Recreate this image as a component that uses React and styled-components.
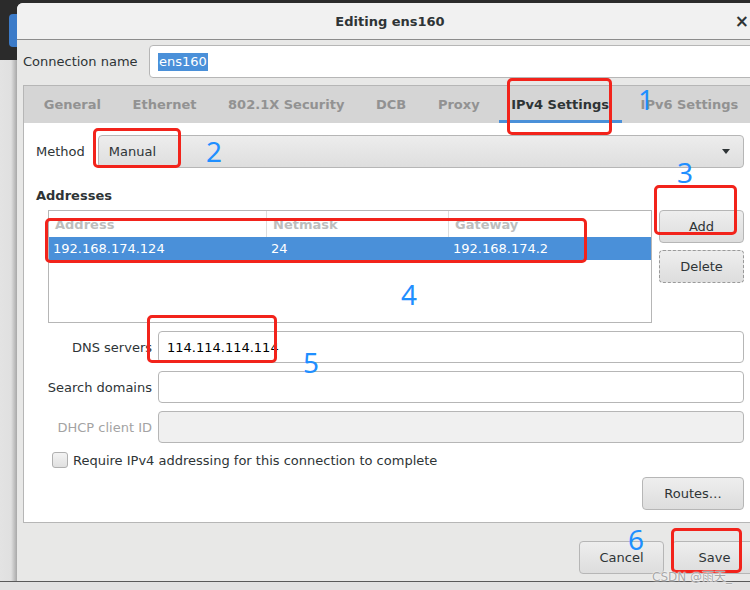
import styled, { createGlobalStyle } from "styled-components"

const GlobalStyle = createGlobalStyle`
  html, body {
    margin: 0;
    padding: 0;
  }
  body {
    width: 750px;
    height: 590px;
    overflow: hidden;
    background: #2b2b2b;
    font-family: "DejaVu Sans", "Noto Sans CJK SC", sans-serif;
    font-size: 13px;
    color: #2e3436;
  }
`

const Screen = styled.div`
  position: relative;
  width: 750px;
  height: 590px;
  overflow: hidden;
  display: flex;
  flex-direction: column;
  background: #2b2b2b;
`

const TopEdge = styled.div`
  height: 3px;
  flex: none;
  background: #2b2b2b;
`

const Middle = styled.div`
  flex: 1;
  display: flex;
  min-height: 0;
`

const SideStrip = styled.div`
  width: 17px;
  flex: none;
  display: flex;
  flex-direction: column;
`

const SideDark = styled.div`
  height: 57px;
  flex: none;
  background: #2b2b2b;
  padding: 11px 0 0 9px;
  box-sizing: border-box;
`

const SideButton = styled.div`
  height: 33px;
  background: #3c7bc8;
  border-radius: 4px 0 0 4px;
`

const SideLight = styled.div`
  flex: 1;
  background: linear-gradient(to right, #e3e3e3 0, #e0e0e0 11px, #c4c4c4 14px, #a8a8a8 17px);
`

const Dialog = styled.div`
  width: 746px;
  flex: none;
  display: flex;
  flex-direction: column;
  background: #e8e8e7;
  border-radius: 6px 6px 0 0;
  overflow: hidden;
`

const TitleBar = styled.div`
  height: 36px;
  flex: none;
  display: grid;
  grid-template-columns: 1fr auto 1fr;
  align-items: center;
  background: #f1f1f1;
  border-bottom: 1px solid #8c8c8c;
`

const Title = styled.div`
  grid-column: 2;
  font-weight: bold;
  color: #2e3436;
`

const Close = styled.div`
  justify-self: end;
  padding-right: 14px;
  font-size: 17px;
  font-weight: bold;
  color: #2e3436;
`

const Body = styled.div`
  flex: 1;
  display: flex;
  flex-direction: column;
  padding: 5px 6px 0;
`

const NameRow = styled.div`
  display: flex;
  align-items: center;
  height: 33px;
`

const NameLabel = styled.div`
  width: 126px;
  flex: none;
`

const Entry = styled.div`
  flex: 1;
  height: ${p => p.$h || 32}px;
  box-sizing: border-box;
  display: flex;
  align-items: center;
  padding-left: 8px;
  background: ${p => (p.$disabled ? "#f0f0f0" : "#ffffff")};
  border: 1px solid #b6b6b6;
  border-radius: 4px;
  color: #000;
`

const Selection = styled.span`
  background: #4a90d9;
  color: #fff;
  line-height: 18px;
  padding: 0 1px;
`

const Notebook = styled.div`
  margin-top: 7px;
  display: flex;
  flex-direction: column;
  border: 1px solid #b6b6b6;
  background: #fff;
`

const TabBar = styled.div`
  height: 37px;
  display: flex;
  padding-left: 4px;
  background: #d5d5d5;
`

const Tab = styled.div`
  position: relative;
  display: flex;
  align-items: center;
  padding: 0 15.8px;
  font-weight: bold;
  white-space: nowrap;
  color: ${p => (p.$active ? "#2e3436" : "#929292")};

  &::after {
    content: "";
    display: ${p => (p.$active ? "block" : "none")};
    position: absolute;
    left: 4px;
    right: 3px;
    bottom: 0;
    height: 3px;
    background: #4a90d9;
  }
`

const Page = styled.div`
  display: flex;
  flex-direction: column;
  padding: 12px;
`

const MethodRow = styled.div`
  display: flex;
  align-items: center;
  gap: 13px;
`

const Combo = styled.div`
  flex: 1;
  height: 33px;
  box-sizing: border-box;
  display: flex;
  align-items: center;
  justify-content: space-between;
  padding: 0 13px 0 10px;
  border: 1px solid #b6b6b6;
  border-radius: 4px;
  background: linear-gradient(#ededed, #dedede);
`

const Arrow = styled.span`
  width: 0;
  height: 0;
  border-left: 4px solid transparent;
  border-right: 4px solid transparent;
  border-top: 5px solid #2e3436;
`

const Heading = styled.div`
  margin-top: 19px;
  line-height: 17px;
  font-weight: bold;
`

const AddrGrid = styled.div`
  margin-top: 6px;
  padding-left: 12px;
  display: grid;
  grid-template-columns: 1fr 85px;
  column-gap: 7px;
  align-items: start;
`

const Table = styled.div`
  height: 113px;
  box-sizing: border-box;
  border: 1px solid #b6b6b6;
  background: #fff;
`

const TableRow = styled.div`
  display: grid;
  grid-template-columns: 218px 182px 1fr;
  height: ${p => (p.$head ? 26 : 23)}px;
  background: ${p => (p.$selected ? "#4a90d9" : "transparent")};
  color: ${p => (p.$selected ? "#fff" : "#2e3436")};
`

const HeadCell = styled.div`
  display: flex;
  align-items: center;
  padding-left: 6px;
  font-weight: bold;
  color: #bdbdbd;
  border-right: 1px solid #dedede;
  &:last-child {
    border-right: none;
  }
`

const Cell = styled.div`
  display: flex;
  align-items: center;
  padding-left: 4px;
`

const ButtonCol = styled.div`
  display: flex;
  flex-direction: column;
  gap: 7px;
`

const Button = styled.div`
  width: ${p => p.$w || 85}px;
  height: 33px;
  box-sizing: border-box;
  display: flex;
  align-items: center;
  justify-content: center;
  border: 1px ${p => (p.$focused ? "dashed #9a9a9a" : "solid #b6b6b6")};
  border-radius: 4px;
  background: linear-gradient(#eeeeee, #dddddd);
  color: #2e3436;
`

const FormGrid = styled.div`
  margin-top: 8px;
  display: grid;
  grid-template-columns: 116px 1fr;
  column-gap: 6px;
  row-gap: 8px;
  align-items: center;
`

const FieldLabel = styled.div`
  text-align: right;
  white-space: nowrap;
  color: ${p => (p.$muted ? "#a3a3a3" : "#2e3436")};
`

const CheckRow = styled.div`
  margin: 9px 0 0 16px;
  height: 16px;
  display: flex;
  align-items: center;
  gap: 5px;
`

const Checkbox = styled.span`
  width: 16px;
  height: 16px;
  box-sizing: border-box;
  border: 1px solid #b0b0b0;
  border-radius: 3px;
  background: linear-gradient(#f3f3f3, #e0e0e0);
`

const RoutesRow = styled.div`
  margin-top: 9px;
  display: flex;
  justify-content: flex-end;
`

const Actions = styled.div`
  margin-top: 18px;
  display: flex;
  justify-content: flex-end;
  gap: 8px;
`

const BottomBar = styled.div`
  height: 9px;
  flex: none;
  box-sizing: border-box;
  border-top: 1px solid #5a5a5a;
  background: #e2e2e2;
`

/* markup drawn on top of the dialog */
const Marks = styled.div`
  position: absolute;
  inset: 0;
  pointer-events: none;
`

const RedBox = styled.div`
  position: absolute;
  left: ${p => p.$x}px;
  top: ${p => p.$y}px;
  width: ${p => p.$w}px;
  height: ${p => p.$h}px;
  box-sizing: border-box;
  border: 3px solid #f2231b;
  border-radius: 5px;
`

const Num = styled.div`
  position: absolute;
  left: ${p => p.$x}px;
  top: ${p => p.$y}px;
  font-family: "Noto Sans", sans-serif;
  font-size: 28px;
  line-height: 28px;
  color: #1f8fff;
`

const Watermark = styled.div`
  position: absolute;
  left: 652px;
  top: 567px;
  font-size: 12px;
  color: #a8a8a8;
  text-shadow: 0 0 2px #fff, 0 0 1px #fff;
  font-family: "DejaVu Sans", "Noto Sans CJK SC", sans-serif;
`

const tabs = ["General", "Ethernet", "802.1X Security", "DCB", "Proxy", "IPv4 Settings", "IPv6 Settings"]

const boxes = [
  { x: 507, y: 78, w: 105, h: 57 },
  { x: 93, y: 128, w: 88, h: 40 },
  { x: 654, y: 185, w: 83, h: 50 },
  { x: 45, y: 218, w: 542, h: 45 },
  { x: 147, y: 315, w: 130, h: 48 },
  { x: 671, y: 528, w: 71, h: 45 },
]

const numbers = [
  { n: 1, x: 638, y: 85 },
  { n: 2, x: 206, y: 137 },
  { n: 3, x: 677, y: 158 },
  { n: 4, x: 401, y: 280 },
  { n: 5, x: 303, y: 348 },
  { n: 6, x: 628, y: 525 },
]

export default function App() {
  return (
    <Screen>
      <GlobalStyle />
      <TopEdge />
      <Middle>
        <SideStrip>
          <SideDark>
            <SideButton />
          </SideDark>
          <SideLight />
        </SideStrip>
        <Dialog>
          <TitleBar>
            <Title>Editing ens160</Title>
            <Close>×</Close>
          </TitleBar>
          <Body>
            <NameRow>
              <NameLabel>Connection name</NameLabel>
              <Entry $h={33}>
                <Selection>ens160</Selection>
              </Entry>
            </NameRow>
            <Notebook>
              <TabBar>
                {tabs.map(t => (
                  <Tab key={t} $active={t === "IPv4 Settings"}>{t}</Tab>
                ))}
              </TabBar>
              <Page>
                <MethodRow>
                  <span>Method</span>
                  <Combo>
                    <span>Manual</span>
                    <Arrow />
                  </Combo>
                </MethodRow>
                <Heading>Addresses</Heading>
                <AddrGrid>
                  <Table>
                    <TableRow $head>
                      <HeadCell>Address</HeadCell>
                      <HeadCell>Netmask</HeadCell>
                      <HeadCell>Gateway</HeadCell>
                    </TableRow>
                    <TableRow $selected>
                      <Cell>192.168.174.124</Cell>
                      <Cell>24</Cell>
                      <Cell>192.168.174.2</Cell>
                    </TableRow>
                  </Table>
                  <ButtonCol>
                    <Button>Add</Button>
                    <Button $focused>Delete</Button>
                  </ButtonCol>
                </AddrGrid>
                <FormGrid>
                  <FieldLabel>DNS servers</FieldLabel>
                  <Entry>114.114.114.114</Entry>
                  <FieldLabel>Search domains</FieldLabel>
                  <Entry />
                  <FieldLabel $muted>DHCP client ID</FieldLabel>
                  <Entry $disabled />
                </FormGrid>
                <CheckRow>
                  <Checkbox />
                  <span>Require IPv4 addressing for this connection to complete</span>
                </CheckRow>
                <RoutesRow>
                  <Button $w={102}>Routes…</Button>
                </RoutesRow>
              </Page>
            </Notebook>
            <Actions>
              <Button>Cancel</Button>
              <Button>Save</Button>
            </Actions>
          </Body>
        </Dialog>
      </Middle>
      <BottomBar />
      <Marks>
        {boxes.map((b, i) => (
          <RedBox key={i} $x={b.x} $y={b.y} $w={b.w} $h={b.h} />
        ))}
        {numbers.map(d => (
          <Num key={d.n} $x={d.x} $y={d.y}>{d.n}</Num>
        ))}
        <Watermark>CSDN @雨天_</Watermark>
      </Marks>
    </Screen>
  )
}
